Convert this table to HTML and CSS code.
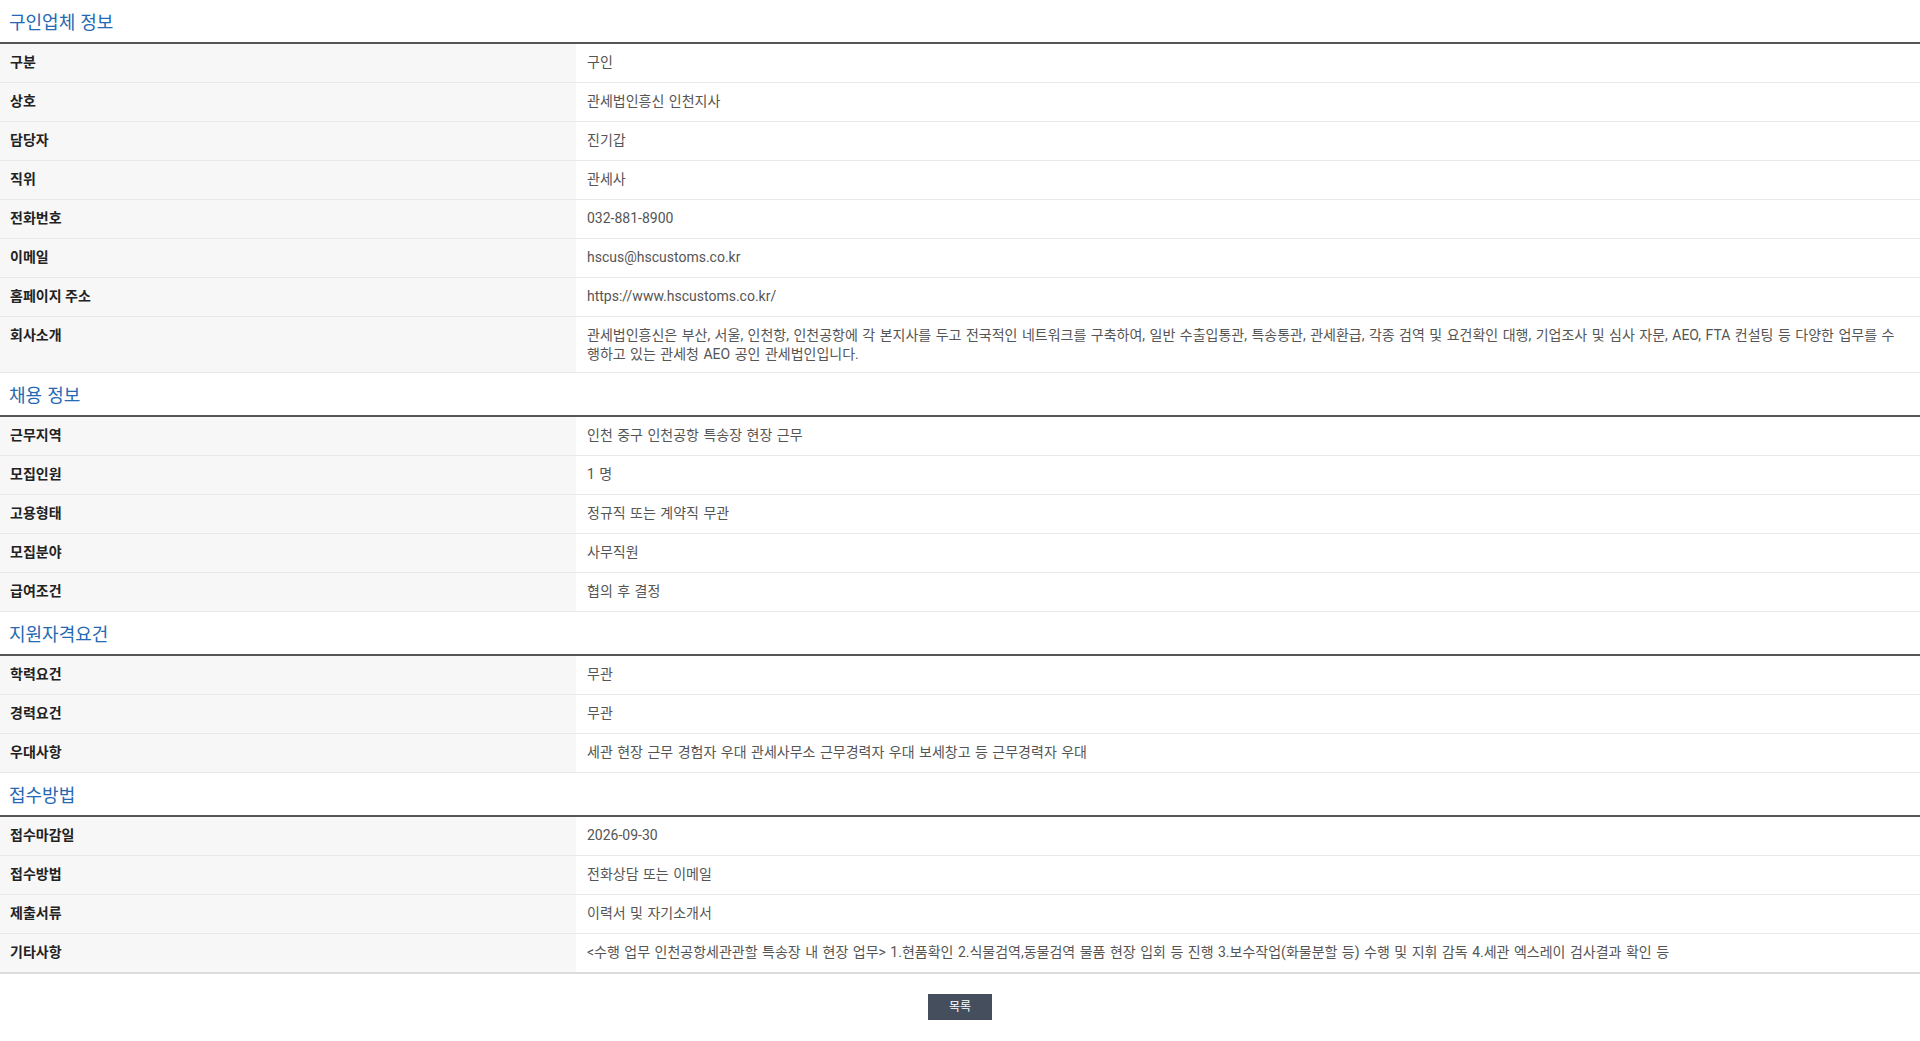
FILE: index.html
```html
<!DOCTYPE html>
<html lang="ko">
<head>
<meta charset="utf-8">
<title>채용정보</title>
<link rel="stylesheet" href="styles.css">
</head>
<body>
<div class="page">
  <section class="sect">
    <h3 class="sect-title">구인업체 정보</h3>
    <table class="info">
      <tr><th>구분</th><td>구인</td></tr>
      <tr><th>상호</th><td>관세법인흥신 인천지사</td></tr>
      <tr><th>담당자</th><td>진기갑</td></tr>
      <tr><th>직위</th><td>관세사</td></tr>
      <tr><th>전화번호</th><td>032-881-8900</td></tr>
      <tr><th>이메일</th><td>hscus@hscustoms.co.kr</td></tr>
      <tr><th>홈페이지 주소</th><td>https://www.hscustoms.co.kr/</td></tr>
      <tr><th>회사소개</th><td class="multi">관세법인흥신은 부산, 서울, 인천항, 인천공항에 각 본지사를 두고 전국적인 네트워크를 구축하여, 일반 수출입통관, 특송통관, 관세환급, 각종 검역 및 요건확인 대행, 기업조사 및 심사 자문, AEO, FTA 컨설팅 등 다양한 업무를 수행하고 있는 관세청 AEO 공인 관세법인입니다.</td></tr>
    </table>
  </section>
  <section class="sect">
    <h3 class="sect-title">채용 정보</h3>
    <table class="info">
      <tr><th>근무지역</th><td>인천 중구 인천공항 특송장 현장 근무</td></tr>
      <tr><th>모집인원</th><td>1 명</td></tr>
      <tr><th>고용형태</th><td>정규직 또는 계약직 무관</td></tr>
      <tr><th>모집분야</th><td>사무직원</td></tr>
      <tr><th>급여조건</th><td>협의 후 결정</td></tr>
    </table>
  </section>
  <section class="sect">
    <h3 class="sect-title">지원자격요건</h3>
    <table class="info">
      <tr><th>학력요건</th><td>무관</td></tr>
      <tr><th>경력요건</th><td>무관</td></tr>
      <tr><th>우대사항</th><td>세관 현장 근무 경험자 우대 관세사무소 근무경력자 우대 보세창고 등 근무경력자 우대</td></tr>
    </table>
  </section>
  <section class="sect">
    <h3 class="sect-title">접수방법</h3>
    <table class="info last">
      <tr><th>접수마감일</th><td>2026-09-30</td></tr>
      <tr><th>접수방법</th><td>전화상담 또는 이메일</td></tr>
      <tr><th>제출서류</th><td>이력서 및 자기소개서</td></tr>
      <tr><th>기타사항</th><td>&lt;수행 업무 인천공항세관관할 특송장 내 현장 업무&gt; 1.현품확인 2.식물검역,동물검역 물품 현장 입회 등 진행 3.보수작업(화물분할 등) 수행 및 지휘 감독 4.세관 엑스레이 검사결과 확인 등</td></tr>
    </table>
  </section>
  <div class="btns">
    <a class="btn" href="#">목록</a>
  </div>
</div>
</body>
</html>
```

FILE: styles.css
```css
html, body {
  margin: 0;
  padding: 0;
  background: #fff;
}
body {
  font-family: Roboto, "Noto Sans CJK KR", sans-serif;
  font-size: 14px;
  color: #555;
}
.page {
  width: 1920px;
}
.sect-title {
  margin: 0;
  height: 42px;
  line-height: 42px;
  padding-left: 9px;
  font-family: "Noto Sans CJK KR", sans-serif;
  font-size: 18px;
  font-weight: 400;
  color: #2469b3;
  border-bottom: 2px solid #555;
  box-sizing: content-box;
}
.info {
  width: 100%;
  border-collapse: collapse;
  table-layout: fixed;
}
.info th,
.info td {
  border-bottom: 1px solid #e9e9e9;
  line-height: 19px;
  padding: 9px 10px 10px;
  vertical-align: top;
  text-align: left;
}
.info th {
  width: 30%;
  box-sizing: border-box;
  background: #f7f7f7;
  color: #222;
  font-weight: 700;
  padding-left: 10px;
}
.info td {
  background: #fff;
  color: #555;
  padding-left: 11px;
  padding-right: 14px;
  word-break: break-all;
  word-spacing: 1px;
}
.info td.multi {
  padding-bottom: 8px;
}
.info.last tr:last-child th,
.info.last tr:last-child td {
  border-bottom: 2px solid #dcdcdc;
}
.btns {
  display: flex;
  justify-content: center;
  padding-top: 20px;
}
.btn {
  display: block;
  width: 64px;
  height: 26px;
  line-height: 26px;
  text-align: center;
  background: #444e5c;
  color: #fff;
  font-size: 12px;
  text-decoration: none;
}
```
